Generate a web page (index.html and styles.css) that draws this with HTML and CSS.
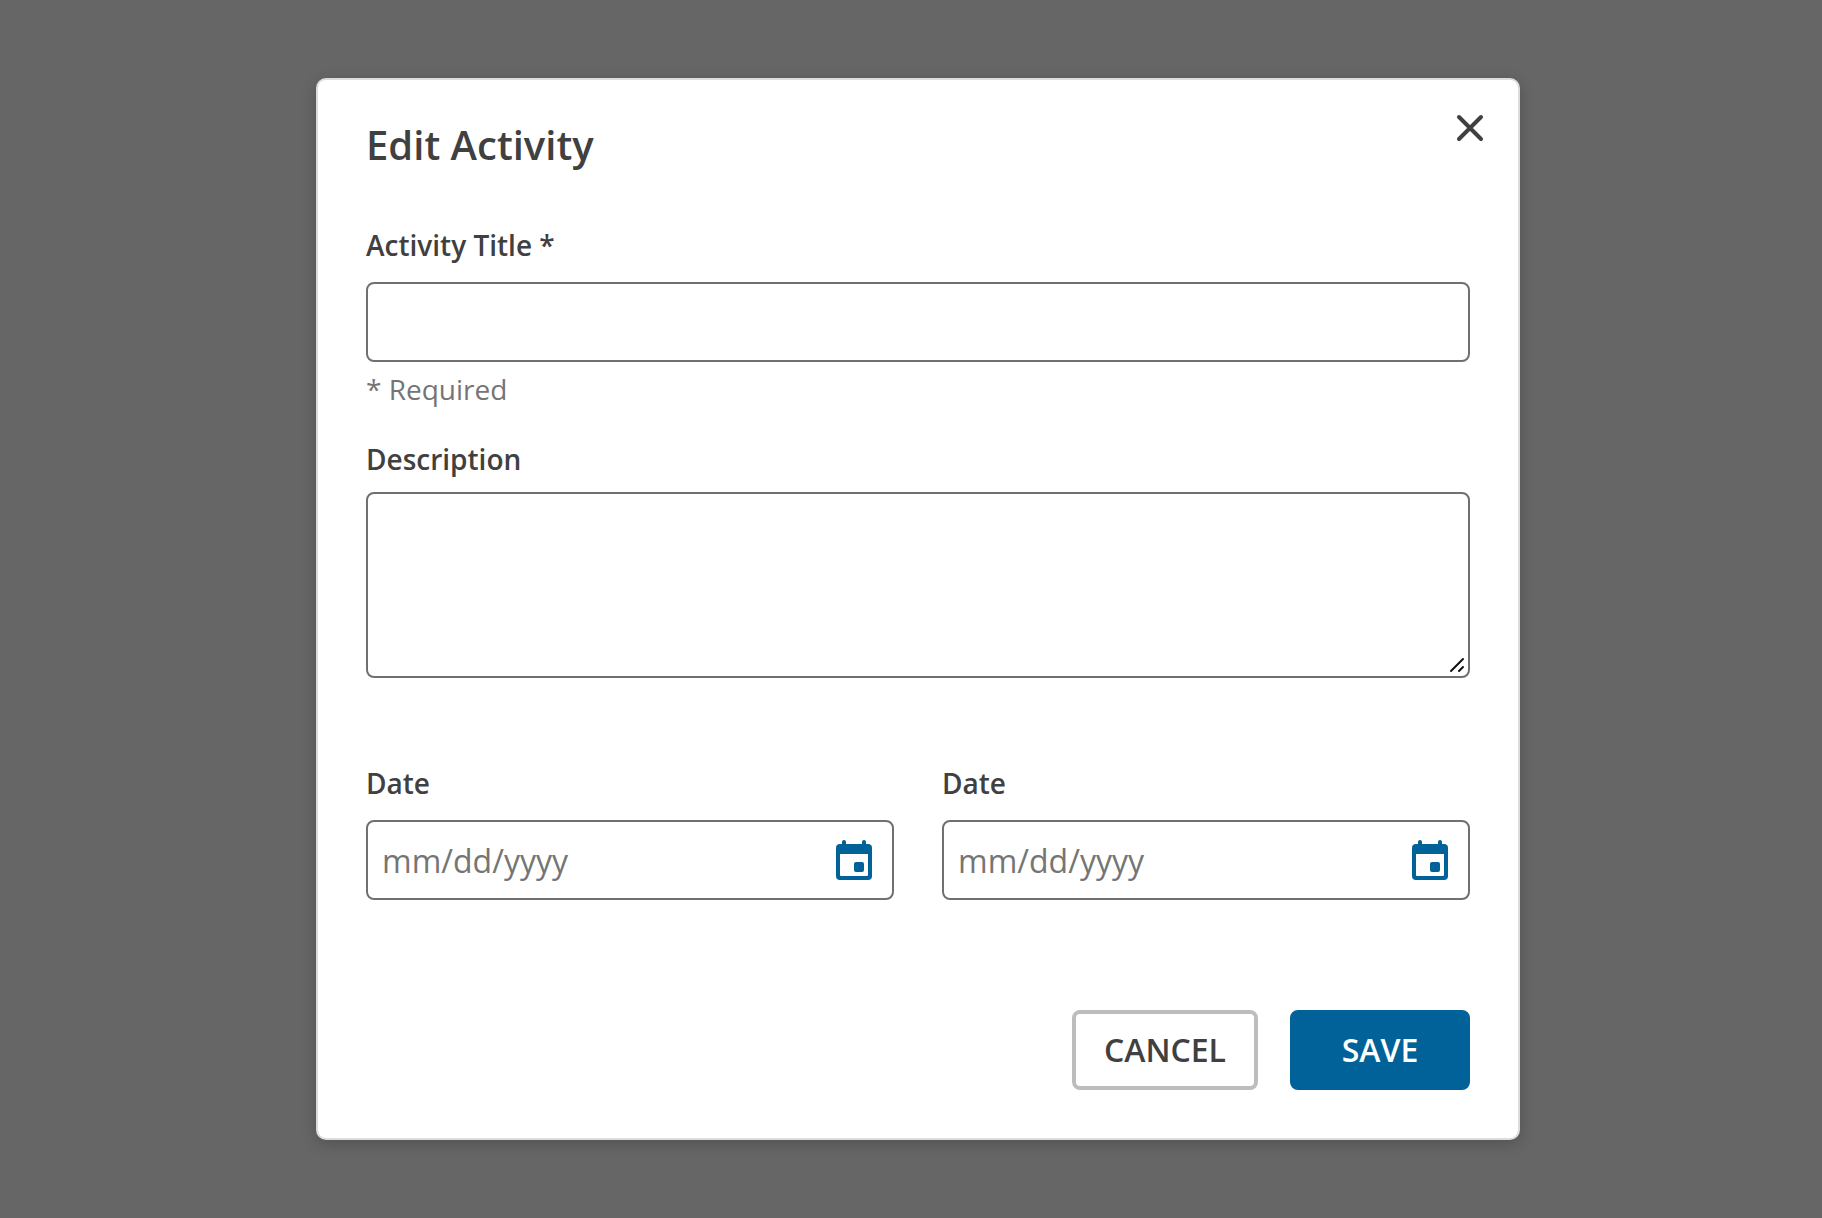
FILE: index.html
```html
<!DOCTYPE html>
<html lang="en">
<head>
  <meta charset="utf-8">
  <meta name="viewport" content="width=device-width, initial-scale=1">
  <title>Edit Activity</title>
  <link rel="stylesheet" href="styles.css">
</head>
<body>
  <div class="backdrop">
    <form class="dialog" role="dialog" aria-modal="true" aria-labelledby="dialog-title">
      <h1 class="dialog-title" id="dialog-title">Edit Activity</h1>
      <button class="close-button" type="button" aria-label="Close">
        <svg class="close-icon" viewBox="0 0 28 28" aria-hidden="true"><path d="M3 3l22 22M25 3l-22 22"/></svg>
      </button>

      <div class="field field-title">
        <label class="label" for="activity-title">Activity Title *</label>
        <input class="control" id="activity-title" type="text" aria-describedby="title-hint">
        <p class="hint" id="title-hint">* Required</p>
      </div>

      <div class="field field-description">
        <label class="label" for="description">Description</label>
        <div class="textarea-box">
          <textarea class="control textarea" id="description"></textarea>
          <svg class="grip" viewBox="0 0 16 16" aria-hidden="true"><path d="M2 14L14 2M10 14l4-4"/></svg>
        </div>
      </div>

      <div class="date-row">
        <div class="field">
          <label class="label" for="start-date">Date</label>
          <div class="control date-box">
            <input class="date-input" id="start-date" type="text" placeholder="mm/dd/yyyy">
            <button class="date-button" type="button" aria-label="Choose date">
              <svg class="calendar-icon" viewBox="0 0 36 40" aria-hidden="true"><path fill-rule="evenodd" d="M6 4V2a2 2 0 0 1 4 0v2h16V2a2 2 0 0 1 4 0v2h2a4 4 0 0 1 4 4v28a4 4 0 0 1-4 4H4a4 4 0 0 1-4-4V8a4 4 0 0 1 4-4zM4 14v21a1 1 0 0 0 1 1h26a1 1 0 0 0 1-1V14z"/><rect x="18" y="22" width="10" height="10" rx="2"/></svg>
            </button>
          </div>
        </div>
        <div class="field">
          <label class="label" for="end-date">Date</label>
          <div class="control date-box">
            <input class="date-input" id="end-date" type="text" placeholder="mm/dd/yyyy">
            <button class="date-button" type="button" aria-label="Choose date">
              <svg class="calendar-icon" viewBox="0 0 36 40" aria-hidden="true"><path fill-rule="evenodd" d="M6 4V2a2 2 0 0 1 4 0v2h16V2a2 2 0 0 1 4 0v2h2a4 4 0 0 1 4 4v28a4 4 0 0 1-4 4H4a4 4 0 0 1-4-4V8a4 4 0 0 1 4-4zM4 14v21a1 1 0 0 0 1 1h26a1 1 0 0 0 1-1V14z"/><rect x="18" y="22" width="10" height="10" rx="2"/></svg>
            </button>
          </div>
        </div>
      </div>

      <div class="actions">
        <button class="button button-cancel" type="button">CANCEL</button>
        <button class="button button-save" type="submit">SAVE</button>
      </div>
    </form>
  </div>
</body>
</html>
```
FILE: styles.css
```css
*,
*::before,
*::after {
  box-sizing: border-box;
}

body {
  margin: 0;
  background: #666;
  color: #404040;
  font-family: "Open Sans", "Noto Sans", sans-serif;
  -webkit-font-smoothing: antialiased;
}

.backdrop {
  display: flex;
  justify-content: center;
  align-items: center;
  min-height: 100vh;
  padding: 24px 24px 24px 38px;
}

.dialog {
  position: relative;
  width: 100%;
  max-width: 1204px;
  padding: 36px 48px 48px;
  background: #fff;
  border: 2px solid #dcdcdc;
  border-radius: 10px;
  box-shadow: 0 4px 16px rgba(0, 0, 0, 0.2);
}

.dialog-title {
  margin: 0;
  font-size: 40px;
  font-weight: 600;
  line-height: 58px;
}

.close-button {
  position: absolute;
  top: 24px;
  right: 24px;
  display: grid;
  place-items: center;
  width: 48px;
  height: 48px;
  padding: 0;
  background: none;
  border: 0;
}

.close-icon {
  width: 28px;
  height: 28px;
  fill: none;
  stroke: #404040;
  stroke-width: 4;
  stroke-linecap: round;
}

.field {
  display: flex;
  flex: 1;
  flex-direction: column;
  gap: 18px;
  min-width: 0;
}

.field-title {
  margin-top: 52px;
}

.field-description {
  gap: 14px;
  margin-top: 32px;
}

.label {
  font-size: 28px;
  font-weight: 600;
  line-height: 38px;
}

.control {
  width: 100%;
  height: 80px;
  padding: 0 14px;
  background: #fff;
  border: 2px solid #707070;
  border-radius: 8px;
  color: #404040;
  font: inherit;
  font-size: 32px;
}

.hint {
  margin: -10px 0 0;
  color: #757575;
  font-size: 28px;
  line-height: 38px;
}

.textarea-box {
  position: relative;
  display: flex;
}

.textarea {
  height: 186px;
  padding: 14px;
  resize: vertical;
}

.textarea::-webkit-resizer {
  display: none;
}

.grip {
  position: absolute;
  right: 5px;
  bottom: 5px;
  width: 16px;
  height: 16px;
  fill: none;
  stroke: #111;
  stroke-width: 2;
  stroke-linecap: round;
  pointer-events: none;
}

.date-row {
  display: flex;
  gap: 48px;
  margin-top: 86px;
}

.date-box {
  display: flex;
  align-items: center;
}

.date-input {
  flex: 1;
  min-width: 0;
  height: 100%;
  padding: 0;
  background: none;
  border: 0;
  color: #404040;
  font: inherit;
}

.date-input::placeholder {
  color: #757575;
  opacity: 1;
}

.date-button {
  display: grid;
  place-items: center;
  width: 48px;
  height: 48px;
  padding: 0;
  background: none;
  border: 0;
}

.calendar-icon {
  width: 36px;
  height: 40px;
  fill: #006298;
}

.actions {
  display: flex;
  justify-content: flex-end;
  gap: 32px;
  margin-top: 110px;
}

.button {
  min-width: 180px;
  height: 80px;
  padding: 0 28px 2px;
  border: 4px solid;
  border-radius: 8px;
  font: inherit;
  font-size: 32px;
  font-weight: 600;
}

.button-cancel {
  background: #fff;
  border-color: #bdbdbd;
  color: #404040;
}

.button-save {
  background: #006298;
  border-color: #006298;
  color: #fff;
}

.control:focus-within,
.button:focus-visible,
.close-button:focus-visible,
.date-button:focus-visible {
  outline: 2px solid #006298;
  outline-offset: 2px;
}

.date-input:focus {
  outline: none;
}
```
